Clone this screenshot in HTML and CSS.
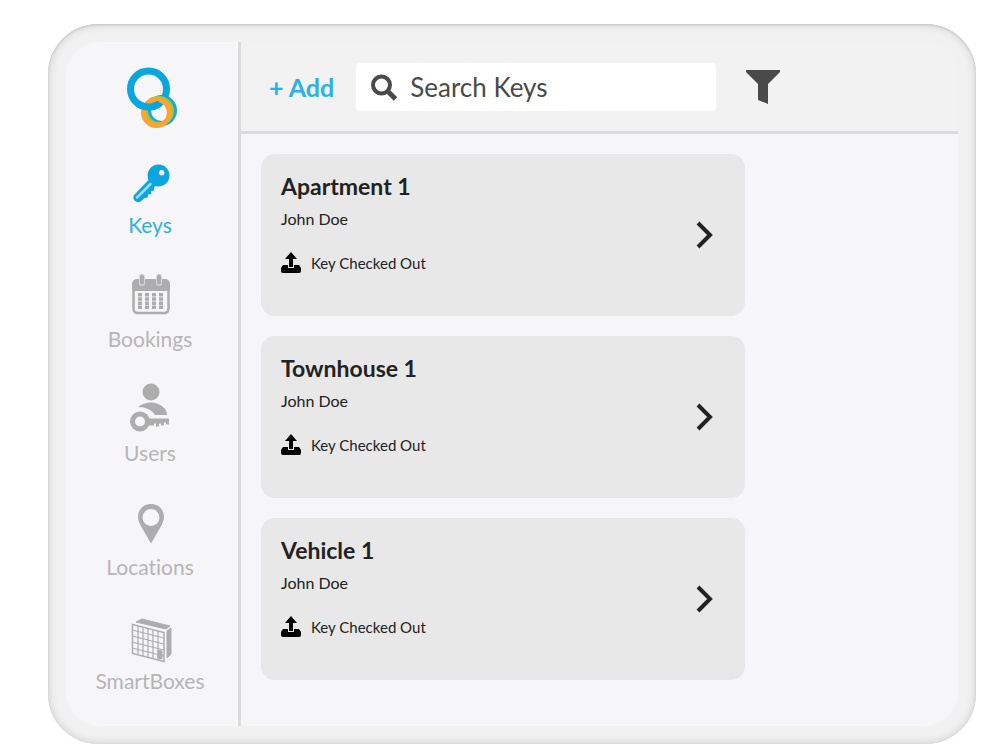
FILE: index.html
```html
<!DOCTYPE html>
<html lang="en">
<head>
  <meta charset="UTF-8">
  <meta name="viewport" content="width=device-width, initial-scale=1.0">
  <title>Keys</title>
  <link rel="stylesheet" href="styles.css">
</head>
<body>
  <!-- Shared icons -->
  <svg class="icon-defs" aria-hidden="true">
    <symbol id="icon-checkout" viewBox="0 0 22 22">
      <path d="M10 0l6 7h-4v8H8V7H4z"/>
      <path d="M2 13h5v3h6v-3h5l2 3v3a2 2 0 0 1-2 2H2a2 2 0 0 1-2-2v-3z"/>
    </symbol>
    <symbol id="icon-chevron" viewBox="0 0 20 30">
      <path d="M3 3l12 12L3 27" fill="none" stroke="currentColor" stroke-width="4"/>
    </symbol>
  </svg>

  <div class="device">
    <div class="screen">
      <!-- Sidebar -->
      <aside class="sidebar">
        <svg class="logo" viewBox="-4 0 56 62" fill="none" aria-hidden="true">
          <circle cx="35.500" cy="43.500" r="13" stroke="#1ba9dd" stroke-width="5"/>
          <circle cx="22.500" cy="22" r="18" stroke="#0ba5e0" stroke-width="7"/>
          <circle cx="33" cy="44" r="13" stroke="#a9c23f" stroke-width="4"/>
          <circle cx="30.500" cy="45.500" r="13" stroke="#fba42f" stroke-width="5"/>
          <path d="M12 36.500a18 18 0 0 0 22-.5" stroke="#0ba5e0" stroke-width="7"/>
          <path d="M24 33a14 14 0 0 1 13 1" stroke="#fba42f" stroke-width="4"/>
        </svg>

        <nav class="nav">
          <a class="nav-item active" href="#keys">
            <svg viewBox="0 0 56 56" aria-hidden="true">
              <path fill="currentColor" fill-rule="evenodd" d="M36.700 9.500a11 11 0 1 1-3.500 21.500l-1.200 1.500.3 3-3 .5-.3 3-3 .5-.3 3-3 .5-4.500 3.800c-4 1.500-8-2-6.500-6.300L26.500 25a11 11 0 0 1 10.200-15.500zM39.700 15a2.800 2.800 0 1 0 .1 0z"/>
              <path d="M15 42.500L28.500 29" stroke="#9bdcf5" stroke-width="2.500" stroke-linecap="round"/>
            </svg>
            <span>Keys</span>
          </a>
          <a class="nav-item" href="#bookings">
            <svg viewBox="0 0 56 56" aria-hidden="true">
              <rect x="11.500" y="12" width="35" height="32" rx="4" fill="none" stroke="currentColor" stroke-width="2.500"/>
              <path d="M10 22v-7a5 5 0 0 1 5-5h28a5 5 0 0 1 5 5v7z" fill="currentColor"/>
              <path d="M20 8v6M37 8v6" stroke="#d8d8da" stroke-width="6" stroke-linecap="round"/>
              <path d="M20 7.500v6M37 7.500v6" stroke="currentColor" stroke-width="4" stroke-linecap="round"/>
              <path d="M18 24v16M25 24v16M32 24v16M39 24v16" stroke="currentColor" stroke-width="4" stroke-dasharray="3.500 .7"/>
            </svg>
            <span>Bookings</span>
          </a>
          <a class="nav-item" href="#users">
            <svg viewBox="0 0 56 56" aria-hidden="true">
              <circle cx="29" cy="9" r="8.500" fill="currentColor"/>
              <path d="M16 24c7-6 19-6 25 0 3 2 4 5 4 8H33c-3-5-9-8-17-8z" fill="currentColor"/>
              <circle cx="18" cy="38.500" r="7.500" fill="none" stroke="currentColor" stroke-width="5"/>
              <path d="M26 35.500h21v6h-3v-2h-2v3h-3v-2h-2v3h-3v-3h-2v2h-6z" fill="currentColor"/>
            </svg>
            <span>Users</span>
          </a>
          <a class="nav-item" href="#locations">
            <svg viewBox="0 0 56 56" aria-hidden="true">
              <path fill="currentColor" fill-rule="evenodd" d="M29 7c7.500 0 13 5.500 13 13 0 4-2 7-4 11l-9 15.500L20 31c-2-4-4-7-4-11 0-7.500 5.500-13 13-13zm0 5a8.500 8.500 0 1 0 0 17 8.500 8.500 0 0 0 0-17z"/>
            </svg>
            <span>Locations</span>
          </a>
          <a class="nav-item" href="#smartboxes">
            <svg viewBox="0 0 56 56" fill="none" stroke="currentColor" aria-hidden="true">
              <path d="M14 11l6-3 28 7-4 3z" fill="currentColor" stroke-width="1"/>
              <path d="M45 20l4-3v26l-4 4z" fill="currentColor" stroke-width="1"/>
              <path d="M10.500 13.500l31.500 8v29l-31.500-8z" stroke-width="1.500"/>
              <path d="M16 15v28M21 16v29M26 17v29M31 19v28M36 20v29" stroke-width="1.200"/>
              <path d="M10 19l32 8M10 25l32 8M10 31l32 8M10 37l32 8" stroke-width="1.200"/>
              <path d="M36 39l4 1v8l-4-1z" fill="currentColor"/>
            </svg>
            <span>SmartBoxes</span>
          </a>
        </nav>
      </aside>

      <!-- Main content -->
      <main class="content">
        <header class="toolbar">
          <button class="add-button" type="button">+ Add</button>
          <label class="search">
            <svg viewBox="0 0 28 28" fill="none" stroke="currentColor" aria-hidden="true">
              <circle cx="11.500" cy="12" r="8.500" stroke-width="4"/>
              <path d="M17.500 18l8 8" stroke-width="5"/>
            </svg>
            <input type="search" placeholder="Search Keys" aria-label="Search Keys">
          </label>
          <button class="filter-button" type="button" aria-label="Filter">
            <svg viewBox="0 0 34 34" fill="currentColor" aria-hidden="true">
              <path d="M0 0h34v2L22 14v20l-10-4V14L0 2z"/>
            </svg>
          </button>
        </header>

        <div class="key-list">
          <a class="key-card" href="#apartment-1">
            <div class="key-info">
              <h2>Apartment 1</h2>
              <p class="owner">John Doe</p>
              <p class="status"><svg aria-hidden="true"><use href="#icon-checkout"/></svg>Key Checked Out</p>
            </div>
            <svg class="chevron" aria-hidden="true"><use href="#icon-chevron"/></svg>
          </a>
          <a class="key-card" href="#townhouse-1">
            <div class="key-info">
              <h2>Townhouse 1</h2>
              <p class="owner">John Doe</p>
              <p class="status"><svg aria-hidden="true"><use href="#icon-checkout"/></svg>Key Checked Out</p>
            </div>
            <svg class="chevron" aria-hidden="true"><use href="#icon-chevron"/></svg>
          </a>
          <a class="key-card" href="#vehicle-1">
            <div class="key-info">
              <h2>Vehicle 1</h2>
              <p class="owner">John Doe</p>
              <p class="status"><svg aria-hidden="true"><use href="#icon-checkout"/></svg>Key Checked Out</p>
            </div>
            <svg class="chevron" aria-hidden="true"><use href="#icon-chevron"/></svg>
          </a>
        </div>
      </main>
    </div>
  </div>
</body>
</html>
```

FILE: styles.css
```css
* {
  box-sizing: border-box;
}

body {
  font-family: Lato, "Open Sans", sans-serif;
  font-variant-ligatures: none;
  margin: 0;
  padding: 24px 24px 10px 48px;
  background: #fff;
}

a {
  color: inherit;
  text-decoration: none;
}

button {
  padding: 0;
  border: none;
  background: none;
  font-family: inherit;
  cursor: pointer;
}

.icon-defs {
  display: none;
}

.device {
  padding: 18px;
  border-radius: 50px;
  background: #f1f1f1;
  box-shadow: inset 0 0 8px #c8c8c8, inset 0 1px 2px #c4c4c4;
}

.screen {
  display: flex;
  border-radius: 34px;
  overflow: hidden;
  background: #f6f6f9;
}

/* Sidebar */
.sidebar {
  display: flex;
  flex-direction: column;
  align-items: center;
  gap: 26px;
  width: 175px;
  flex-shrink: 0;
  padding: 25px 4px 33px 0;
  border-right: 3px solid #dbdbdc;
}

.logo {
  width: 56px;
  height: 62px;
}

.nav {
  display: flex;
  flex-direction: column;
  gap: 32px;
}

.nav-item {
  display: flex;
  flex-direction: column;
  align-items: center;
  gap: 2px;
  color: #adadad;
  font-size: 21px;
  line-height: 24px;
}

.nav-item span {
  color: #b5b5b5;
}

.nav-item svg {
  width: 56px;
  height: 56px;
}

.nav-item.active {
  color: #0ba5e0;
}

.nav-item.active span {
  color: #2bb1e5;
}

/* Toolbar */
.content {
  flex: 1;
  min-width: 0;
}

.toolbar {
  display: flex;
  align-items: center;
  padding: 21px 28px 20px;
  border-bottom: 3px solid #dbdbdc;
  background: #f2f2f2;
}

.add-button {
  margin-right: 22px;
  color: #2bb1e5;
  font-size: 25px;
  font-weight: bold;
  line-height: 48px;
  white-space: nowrap;
}

.search {
  display: flex;
  align-items: center;
  gap: 12px;
  flex: 0 1 360px;
  min-width: 0;
  height: 48px;
  padding: 0 14px;
  border-radius: 4px;
  background: #fff;
  color: #4a4a4a;
}

.search svg {
  width: 28px;
  height: 28px;
  flex-shrink: 0;
}

.search input {
  flex: 1;
  min-width: 0;
  padding: 0;
  border: none;
  outline: none;
  background: none;
  color: #4a4a4a;
  font-family: inherit;
  font-size: 26px;
}

.search input::placeholder {
  color: #4a4a4a;
}

.filter-button {
  margin-left: 30px;
  color: #4a4a4a;
}

.filter-button svg {
  display: block;
  width: 34px;
  height: 34px;
}

/* Key cards */
.key-list {
  display: flex;
  flex-direction: column;
  gap: 20px;
  max-width: 524px;
  padding: 20px;
}

.key-card {
  display: flex;
  align-items: center;
  justify-content: space-between;
  padding: 0 30px 0 20px;
  border-radius: 14px;
  background: #e8e8e8;
  color: #222;
}

.key-info {
  padding: 18px 0 42px;
}

.key-card h2 {
  margin: 0 0 8px;
  font-size: 23px;
  line-height: 28px;
}

.key-card p {
  margin: 0;
  font-size: 16px;
  line-height: 22px;
}

.key-card .status {
  display: flex;
  align-items: center;
  gap: 8px;
  margin-top: 22px;
  font-size: 15px;
}

.status svg {
  width: 22px;
  height: 22px;
  fill: #000;
}

.chevron {
  width: 20px;
  height: 30px;
}
```
